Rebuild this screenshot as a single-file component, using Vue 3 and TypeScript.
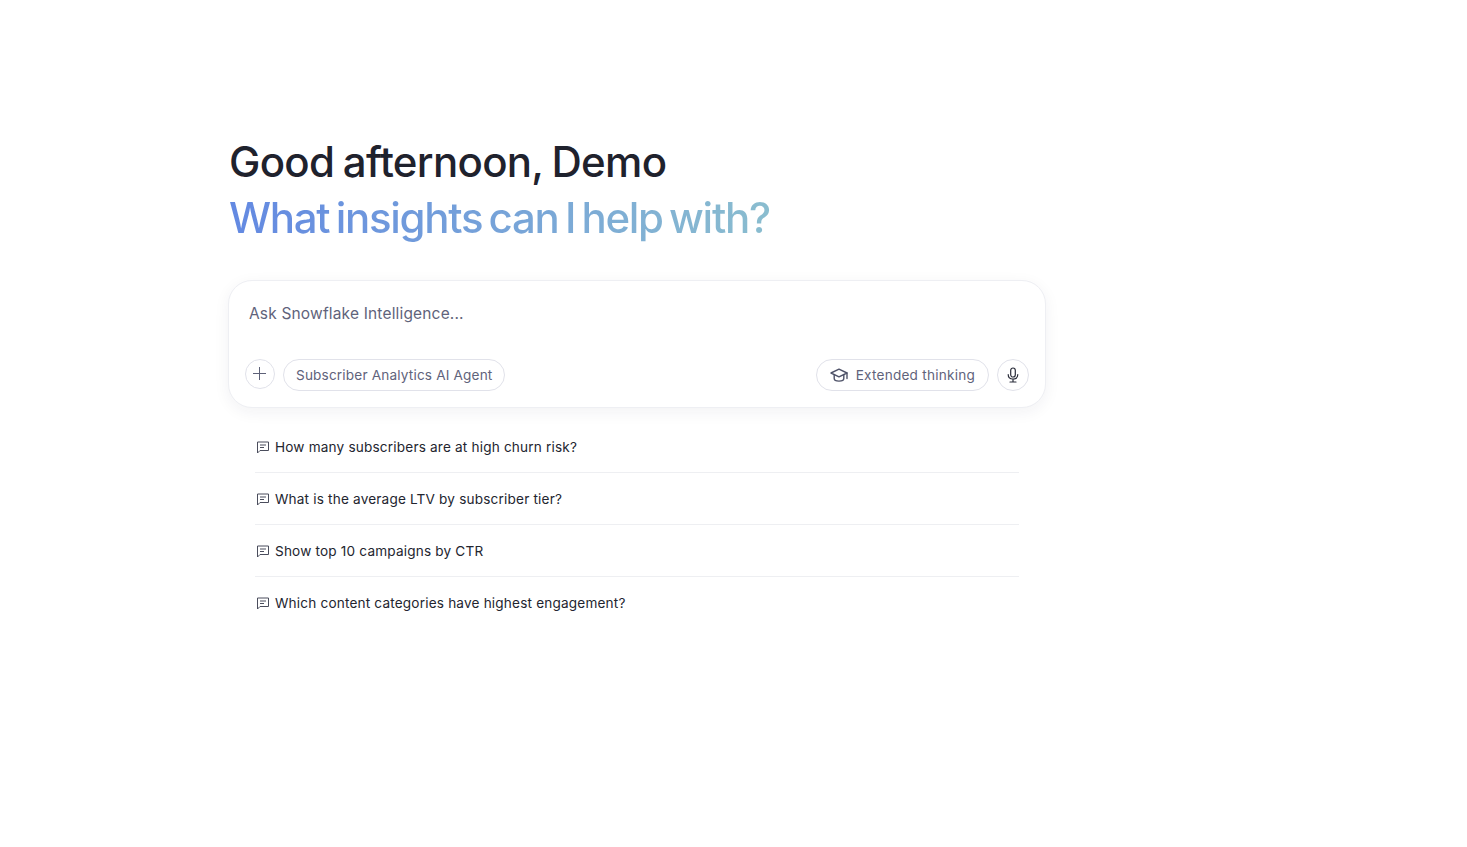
<template>
  <main class="page">
    <section class="column">
      <h1 class="greeting">
        <span class="hello">Good afternoon, Demo</span>
        <span class="ask"><span class="grad">What insights can I help with?</span></span>
      </h1>

      <div class="composer">
        <div class="placeholder">Ask Snowflake Intelligence...</div>
        <div class="tools">
          <button class="round plus" aria-label="Add">
            <svg width="16" height="16" viewBox="0 0 16 16" fill="none" stroke="#5d6178" stroke-width="1">
              <path d="M7.5 1v13M1 7.5h13" />
            </svg>
          </button>
          <button class="chip">Subscriber Analytics AI Agent</button>
          <div class="spacer"></div>
          <button class="chip think">
            <svg width="18" height="18" viewBox="0 0 18 18" fill="none" stroke="#4f5369" stroke-width="1.4" stroke-linejoin="round" stroke-linecap="round">
              <path d="M1 7 9 3.2 17 7 9 10.8z" />
              <path d="M4.2 8.6v3.9c0 1.4 2.1 2.6 4.8 2.6s4.8-1.2 4.8-2.6V8.6" />
              <path d="M17 7v5.5" />
            </svg>
            Extended thinking
          </button>
          <button class="round mic" aria-label="Voice">
            <svg width="16" height="16" viewBox="0 0 16 16" fill="none" stroke="#2a2d3a" stroke-width="1.2" stroke-linecap="round">
              <rect x="5.7" y="1" width="4.6" height="9" rx="2.3" />
              <path d="M3.2 7.5c0 2.8 2 4.5 4.8 4.5s4.8-1.7 4.8-4.5M8 12v3M5 15h6" />
            </svg>
          </button>
        </div>
      </div>

      <ul class="suggestions">
        <li v-for="q in questions" :key="q" class="row">
          <svg width="14" height="14" viewBox="0 0 14 14" fill="none" stroke="#4a4d5c" stroke-width="1" stroke-linejoin="round">
            <path d="M1.5 2h11v8.5H4L1.5 13z" />
            <path d="M4 5h6M4 7.5h4" />
          </svg>
          <span>{{ q }}</span>
        </li>
      </ul>
    </section>
  </main>
</template>

<script setup lang="ts">
const questions: string[] = [
  "How many subscribers are at high churn risk?",
  "What is the average LTV by subscriber tier?",
  "Show top 10 campaigns by CTR",
  "Which content categories have highest engagement?",
]
</script>

<style>
html,
body {
  margin: 0;
  background: #fff;
}
</style>

<style scoped>
.page {
  min-height: 847px;
  box-sizing: border-box;
  padding: 134px 0 0 228px;
  font-family: Inter, "Liberation Sans", sans-serif;
}

.column {
  width: 818px;
}

.greeting {
  margin: 0 0 34px;
  padding-left: 1px;
  font-size: 42px;
  font-weight: 500;
  line-height: 56px;
  white-space: nowrap;
}

.hello,
.ask {
  display: block;
}

.hello {
  color: #1f222d;
  letter-spacing: -0.7px;
  word-spacing: -2px;
}

.ask {
  letter-spacing: -1.3px;
  word-spacing: -3.5px;
}

.grad {
  background: linear-gradient(90deg, #6389e2 0%, #8abdcf 100%);
  -webkit-background-clip: text;
  background-clip: text;
  color: transparent;
}

.composer {
  box-sizing: border-box;
  height: 128px;
  padding: 23px 16px 16px;
  border: 1px solid #eeeff3;
  border-radius: 24px;
  background: #fff;
  box-shadow: 0 4px 16px rgba(30, 35, 60, 0.06);
  display: flex;
  flex-direction: column;
}

.placeholder {
  padding-left: 4px;
  font-size: 15.5px;
  line-height: 20px;
  color: #5f637b;
  letter-spacing: 0.17px;
}

.tools {
  margin-top: auto;
  display: flex;
  align-items: flex-start;
  gap: 8px;
}

.spacer {
  flex: 1;
}

.round,
.chip {
  box-sizing: border-box;
  border: 1px solid #e1e2ea;
  background: #fff;
  padding: 0;
  font-family: inherit;
}

.round {
  border-radius: 50%;
  display: flex;
  align-items: center;
  justify-content: center;
}

.plus {
  width: 30px;
  height: 30px;
}

.mic {
  width: 32px;
  height: 32px;
}

.chip {
  height: 32px;
  padding: 0 12px 1px;
  border-radius: 16px;
  font-size: 13.6px;
  color: #5f637b;
  letter-spacing: 0.17px;
}

.think {
  display: flex;
  align-items: center;
  gap: 8px;
  padding: 0 13px 1px;
  letter-spacing: 0.23px;
}

.suggestions {
  list-style: none;
  margin: 13px 27px 0;
  padding: 0;
}

.row {
  box-sizing: border-box;
  height: 52px;
  padding-left: 1px;
  display: flex;
  align-items: center;
  gap: 5px;
  font-size: 13.6px;
  color: #23252f;
  letter-spacing: 0.18px;
  border-bottom: 1px solid #eeeff2;
}

.row:last-child {
  border-bottom-color: transparent;
}
</style>
